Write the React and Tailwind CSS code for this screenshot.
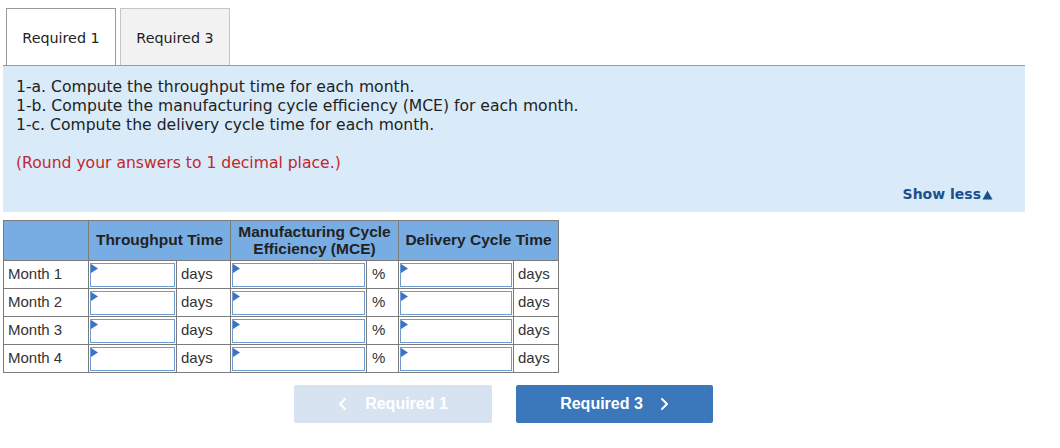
import React from "react";

function InputCell({ w }) {
  return (
    <td className="border border-[#7b7b7b] p-0 align-middle">
      <div className="relative mx-[1px] h-[24px] border border-[#6c9bd3] bg-white" style={{ width: w }}>
        <svg className="absolute left-0 top-0" width="7" height="9" viewBox="0 0 7 9">
          <polygon points="0,0 7,4.5 0,9" fill="#3a74c4" />
        </svg>
      </div>
    </td>
  );
}

function Chevron({ dir }) {
  return (
    <svg width="9" height="14" viewBox="0 0 9 14" className="shrink-0">
      <polyline
        points={dir === "left" ? "7,2 2,7 7,12" : "2,2 7,7 2,12"}
        fill="none"
        stroke="white"
        strokeWidth="2"
        strokeLinecap="round"
        strokeLinejoin="round"
      />
    </svg>
  );
}

export default function App() {
  const months = ["Month 1", "Month 2", "Month 3", "Month 4"];
  return (
    <div className="h-[448px] w-[1060px] bg-white" style={{ fontFamily: "'DejaVu Sans', Verdana, sans-serif" }}>
      <div className="ml-[3px] w-[1022px]">
        <div className="flex gap-[4px] pl-[3px] pt-[8px]">
          <div className="flex h-[57px] w-[110px] items-center justify-center border-l border-r border-t border-[#9a9a9a] bg-white pt-[3px] text-[14.3px] text-[#222]">
            Required 1
          </div>
          <div className="flex h-[57px] w-[110px] items-center justify-center border-l border-r border-t border-[#c6c6c6] bg-[#f2f2f2] pt-[3px] text-[14.3px] text-[#222]">
            Required 3
          </div>
        </div>
        <div className="h-[147px] border-t border-[#9a9a9a] bg-[#d9ebf9] pl-[13px] pr-[32px] pt-[12px]">
          <div className="text-[15.6px] leading-[19px] text-[#222]">
            <div>1-a. Compute the throughput time for each month.</div>
            <div>1-b. Compute the manufacturing cycle efficiency (MCE) for each month.</div>
            <div>1-c. Compute the delivery cycle time for each month.</div>
          </div>
          <div className="mt-[19px] text-[15.6px] leading-[19px] text-[#c1272d]">(Round your answers to 1 decimal place.)</div>
          <div className="mt-[11px] flex items-center justify-end text-[14px] font-bold text-[#1d4f8c]">
            Show less
            <svg width="11" height="10" viewBox="0 0 11 10" className="ml-[1px]">
              <polygon points="5.5,0.5 10.5,9.5 0.5,9.5" fill="#1d4f8c" />
            </svg>
          </div>
        </div>
      </div>
      <div className="ml-[3px] mt-[8px]" style={{ fontFamily: "'Liberation Sans', Arial, sans-serif" }}>
        <table className="border-collapse">
          <thead>
            <tr className="h-[40px] bg-[#78ade3] text-[15.5px] font-bold leading-[17px] text-[#222]">
              <th className="w-[85px] border border-[#7b7b7b]"></th>
              <th colSpan={2} className="border border-[#7b7b7b] pb-[2px] font-bold">Throughput Time</th>
              <th colSpan={2} className="border border-[#7b7b7b] pb-[2px] font-bold">
                Manufacturing Cycle
                <br />
                Efficiency (MCE)
              </th>
              <th colSpan={2} className="border border-[#7b7b7b] pb-[2px] font-bold">Delivery Cycle Time</th>
            </tr>
          </thead>
          <tbody>
            {months.map((m) => (
              <tr key={m} className="h-[28px]">
                <td className="w-[85px] border border-[#7b7b7b] pl-[4px] text-left text-[15px] text-[#333]">{m}</td>
                <InputCell w={85} />
                <td className="w-[54px] border border-[#7b7b7b] px-[4px] text-left text-[15px] text-[#333]">days</td>
                <InputCell w={133} />
                <td className="w-[32px] border border-[#7b7b7b] px-[5px] text-left text-[15px] text-[#333]">%</td>
                <InputCell w={112} />
                <td className="w-[45px] border border-[#7b7b7b] px-[4px] text-left text-[15px] text-[#333]">days</td>
              </tr>
            ))}
          </tbody>
        </table>
      </div>
      <div className="ml-[294px] mt-[12px] flex gap-[24px]" style={{ fontFamily: "'Liberation Sans', Arial, sans-serif" }}>
        <div className="flex h-[38px] w-[198px] items-center justify-center gap-[18px] rounded-[2px] bg-[#d7e3f1] text-[16px] font-bold text-white">
          <Chevron dir="left" />
          <span>Required 1</span>
        </div>
        <div className="flex h-[38px] w-[197px] items-center justify-center gap-[17px] rounded-[2px] bg-[#3a77bb] text-[16px] font-bold text-white">
          <span>Required 3</span>
          <Chevron dir="right" />
        </div>
      </div>
    </div>
  );
}
